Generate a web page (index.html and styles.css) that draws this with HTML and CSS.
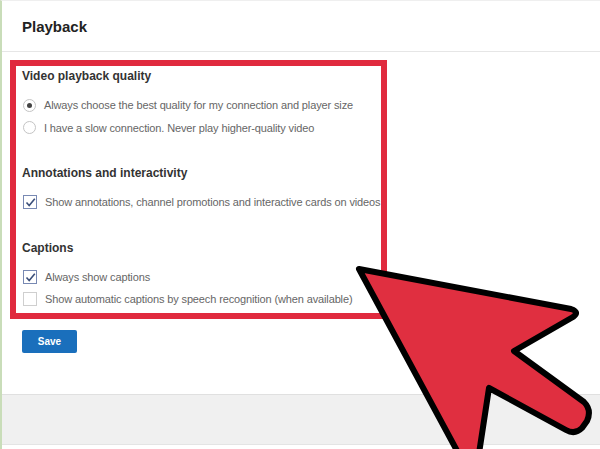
FILE: index.html
```html
<!DOCTYPE html>
<html>
<head>
<meta charset="utf-8">
<link rel="stylesheet" href="styles.css">
</head>
<body>
<div class="page">
  <header class="header"><h1 class="title">Playback</h1></header>
  <div class="box">
    <section class="section">
      <h2 class="heading">Video playback quality</h2>
      <div class="row"><span class="radio on"></span><span class="label">Always choose the best quality for my connection and player size</span></div>
      <div class="row"><span class="radio"></span><span class="label">I have a slow connection. Never play higher-quality video</span></div>
    </section>
    <section class="section s2">
      <h2 class="heading">Annotations and interactivity</h2>
      <div class="row"><span class="check on"><svg viewBox="0 0 13 13" width="13" height="13"><path d="M2.5 6.5 L5.2 9.5 L10.8 2.8" fill="none" stroke="#3b4f7a" stroke-width="1.6"/></svg></span><span class="label">Show annotations, channel promotions and interactive cards on videos</span></div>
    </section>
    <section class="section s3">
      <h2 class="heading">Captions</h2>
      <div class="row"><span class="check on"><svg viewBox="0 0 13 13" width="13" height="13"><path d="M2.5 6.5 L5.2 9.5 L10.8 2.8" fill="none" stroke="#3b4f7a" stroke-width="1.6"/></svg></span><span class="label">Always show captions</span></div>
      <div class="row"><span class="check"></span><span class="label">Show automatic captions by speech recognition (when available)</span></div>
    </section>
  </div>
  <button class="save">Save</button>
  <div class="band"></div>
  <svg class="arrow" width="600" height="449" viewBox="0 0 600 449">
    <path d="M359 269 L571 309 Q580 312 573 317 L514 351 L584 402 Q592 410 587 421 L582 428 Q575 435 566 430 L489 388 L478 460 L462 460 Z" fill="#e02f40" stroke="#000" stroke-width="6" stroke-linejoin="round"/>
  </svg>
</div>
</body>
</html>
```

FILE: styles.css
```css
* { box-sizing: border-box; }
html, body { margin: 0; padding: 0; background: #fff; }
body { font-family: "Liberation Sans", Arial, sans-serif; }
.page {
  position: relative;
  width: 600px;
  height: 449px;
  overflow: hidden;
  border-left: 2px solid #c9ddb9;
  border-top: 1px solid #efefef;
}
.header {
  height: 51px;
  border-bottom: 1px solid #e6e6e6;
  padding-left: 20px;
  display: flex;
  align-items: center;
}
.title {
  margin: 0;
  font-size: 15px;
  font-weight: bold;
  color: #222;
}
.box {
  margin: 8px 0 0 8px;
  width: 377px;
  border: 6px solid #e02a3e;
  padding: 0 0 2px 6px;
}
.heading {
  margin: 0;
  font-size: 12px;
  line-height: 20px;
  font-weight: bold;
  color: #333;
}
.section .heading { margin-bottom: 8px; }
.s2 { margin-top: 24px; }
.s3 { margin-top: 24px; }
.s3 .heading { margin-bottom: 8px; }
.row {
  display: flex;
  align-items: center;
  height: 22.5px;
}
.label {
  font-size: 11px;
  color: #666;
  margin-left: 8px;
  white-space: nowrap;
  letter-spacing: -0.13px;
}
.radio {
  flex-shrink: 0;
  width: 13px;
  height: 13px;
  border: 1px solid #c4c4c4;
  border-radius: 50%;
  margin-left: 1px;
  display: flex;
  align-items: center;
  justify-content: center;
}
.radio.on::after {
  content: "";
  width: 5px;
  height: 5px;
  border-radius: 50%;
  background: #444;
}
.check {
  flex-shrink: 0;
  width: 14px;
  height: 14px;
  border: 1px solid #cfcfcf;
  margin-left: 1px;
  display: flex;
  align-items: center;
  justify-content: center;
  position: relative;
}
.check.on { border-color: #7889b3; }
.check svg { position: absolute; left: 0; top: 0; }
.save {
  display: block;
  margin: 11px 0 0 20px;
  width: 55px;
  height: 23px;
  border: 0;
  border-radius: 2px;
  background: #1a6fbc;
  color: #fff;
  font-family: "Liberation Sans", Arial, sans-serif;
  font-size: 10px;
  font-weight: bold;
  padding: 0;
}
.band {
  margin-top: 41px;
  height: 51px;
  background: #f0f0f0;
  border-top: 1px solid #e0e0e0;
  border-bottom: 1px solid #e4e4e4;
}
.arrow { position: absolute; left: -2px; top: -1px; }
```
